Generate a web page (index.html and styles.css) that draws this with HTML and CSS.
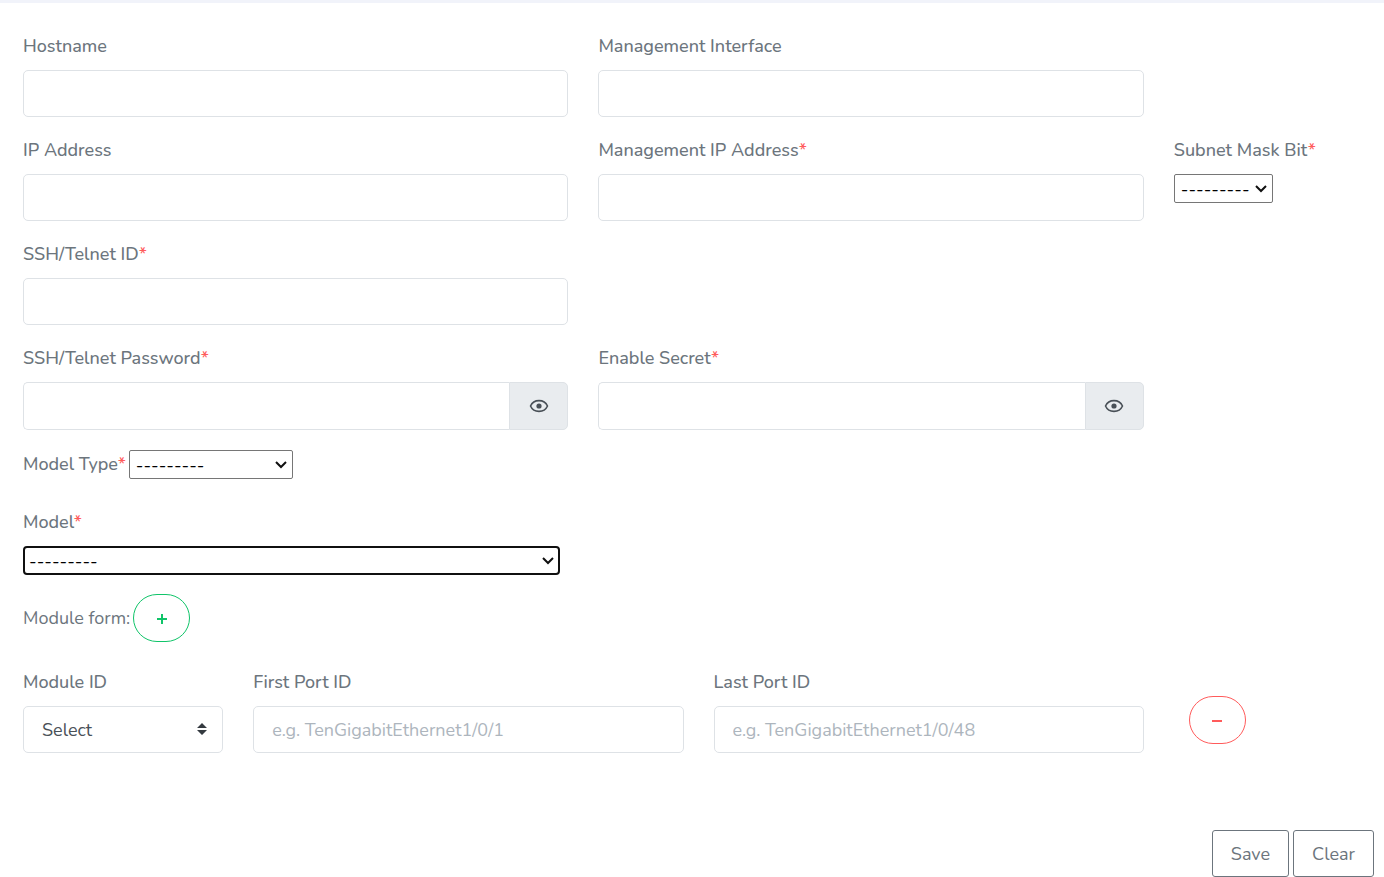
FILE: index.html
```html
<!DOCTYPE html>
<html lang="en">
<head>
    <meta charset="UTF-8">
    <meta name="viewport" content="width=device-width, initial-scale=1.0">
    <title>Add Device</title>
    <link rel="stylesheet" href="styles.css">
</head>
<body>
    <form class="device-form">
        <div class="row">
            <div class="field span-5">
                <label for="hostname">Hostname</label>
                <input type="text" id="hostname" class="form-control">
            </div>
            <div class="field span-5">
                <label for="mgmtInterface">Management Interface</label>
                <input type="text" id="mgmtInterface" class="form-control">
            </div>
        </div>

        <div class="row">
            <div class="field span-5">
                <label for="ipAddress">IP Address</label>
                <input type="text" id="ipAddress" class="form-control">
            </div>
            <div class="field span-5">
                <label for="mgmtIp">Management IP Address<span class="required">*</span></label>
                <input type="text" id="mgmtIp" class="form-control">
            </div>
            <div class="field span-2">
                <label for="subnet">Subnet Mask Bit<span class="required">*</span></label>
                <div class="plain-select subnet-select">
                    <select id="subnet">
                        <option>---------</option>
                    </select>
                    <svg class="chevron" width="12" height="8" viewBox="0 0 12 8"><path d="M1 1L6 6L11 1" fill="none" stroke="currentColor" stroke-width="2"/></svg>
                </div>
            </div>
        </div>

        <div class="row">
            <div class="field span-5">
                <label for="sshId">SSH/Telnet ID<span class="required">*</span></label>
                <input type="text" id="sshId" class="form-control">
            </div>
        </div>

        <div class="row">
            <div class="field span-5">
                <label for="sshPassword">SSH/Telnet Password<span class="required">*</span></label>
                <div class="input-group">
                    <input type="password" id="sshPassword" class="form-control">
                    <button type="button" class="toggle-password" aria-label="Show password">
                        <svg width="20" height="20" viewBox="0 0 20 20"><path d="M1.500 10C3.200 6.200 6.300 4.600 10 4.600S16.800 6.200 18.500 10C16.800 13.800 13.700 15.400 10 15.400S3.200 13.800 1.500 10Z" fill="none" stroke="currentColor" stroke-width="1.600"/><circle cx="10" cy="10" r="2.600" fill="currentColor"/></svg>
                    </button>
                </div>
            </div>
            <div class="field span-5">
                <label for="enableSecret">Enable Secret<span class="required">*</span></label>
                <div class="input-group">
                    <input type="password" id="enableSecret" class="form-control">
                    <button type="button" class="toggle-password" aria-label="Show secret">
                        <svg width="20" height="20" viewBox="0 0 20 20"><path d="M1.500 10C3.200 6.200 6.300 4.600 10 4.600S16.800 6.200 18.500 10C16.800 13.800 13.700 15.400 10 15.400S3.200 13.800 1.500 10Z" fill="none" stroke="currentColor" stroke-width="1.600"/><circle cx="10" cy="10" r="2.600" fill="currentColor"/></svg>
                    </button>
                </div>
            </div>
        </div>

        <div class="inline-field">
            <label for="modelType">Model Type<span class="required">*</span></label>
            <div class="plain-select type-select">
                <select id="modelType">
                    <option>---------</option>
                </select>
                <svg class="chevron" width="12" height="8" viewBox="0 0 12 8"><path d="M1 1L6 6L11 1" fill="none" stroke="currentColor" stroke-width="2"/></svg>
            </div>
        </div>

        <div class="field model-field">
            <label for="model">Model<span class="required">*</span></label>
            <div class="plain-select model-select">
                <select id="model">
                    <option>---------</option>
                </select>
                <svg class="chevron" width="12" height="8" viewBox="0 0 12 8"><path d="M1 1L6 6L11 1" fill="none" stroke="currentColor" stroke-width="2"/></svg>
            </div>
        </div>

        <div class="inline-field module-form">
            <span>Module form:</span>
            <button type="button" class="btn-round btn-add" aria-label="Add module">
                <svg width="12" height="14" viewBox="0 0 12 14"><path d="M1 8H11M6 3V13" stroke="currentColor" stroke-width="2"/></svg>
            </button>
        </div>

        <div class="row">
            <div class="field span-2">
                <label for="moduleId">Module ID</label>
                <div class="custom-select">
                    <select id="moduleId" class="form-control">
                        <option>Select</option>
                    </select>
                    <svg class="arrows" width="10" height="12" viewBox="0 0 10 12"><path d="M0 5L5 0L10 5ZM0 7L5 12L10 7Z" fill="currentColor"/></svg>
                </div>
            </div>
            <div class="field span-4">
                <label for="firstPort">First Port ID</label>
                <input type="text" id="firstPort" class="form-control" placeholder="e.g. TenGigabitEthernet1/0/1">
            </div>
            <div class="field span-4">
                <label for="lastPort">Last Port ID</label>
                <input type="text" id="lastPort" class="form-control" placeholder="e.g. TenGigabitEthernet1/0/48">
            </div>
            <div class="remove-cell span-2">
                <button type="button" class="btn-round btn-remove" aria-label="Remove module">
                    <svg width="12" height="14" viewBox="0 0 12 14"><path d="M1 8H11" stroke="currentColor" stroke-width="2"/></svg>
                </button>
            </div>
        </div>

        <div class="actions">
            <button type="submit" class="btn">Save</button>
            <button type="reset" class="btn">Clear</button>
        </div>
    </form>
</body>
</html>
```
FILE: styles.css
```css
* {
    box-sizing: border-box;
}
body {
    margin: 0;
    border-top: 3px solid #f1f3fa;
    background-color: #fff;
    color: #6c757d;
    font-family: Nunito, "Open Sans", sans-serif;
    font-size: 18px;
    line-height: 27px;
}
input, select, button {
    font-family: inherit;
    font-size: inherit;
    margin: 0;
}
svg {
    display: block;
}
label {
    font-weight: 500;
    white-space: nowrap;
}
.device-form {
    padding: 30px 10px 0 23px;
}
.row {
    display: grid;
    grid-template-columns: repeat(12, 1fr);
    column-gap: 30px;
    margin-bottom: 20px;
}
.span-2 {
    grid-column: span 2;
}
.span-4 {
    grid-column: span 4;
}
.span-5 {
    grid-column: span 5;
}
.field {
    display: flex;
    flex-direction: column;
    align-items: flex-start;
    gap: 10px;
    min-width: 0;
}
.required {
    color: #ff5b5b;
}
.form-control {
    width: 100%;
    height: 47px;
    padding: 0 18px;
    border: 1px solid #dee2e6;
    border-radius: 5px;
    background-color: #fff;
    color: #495057;
}
.form-control::placeholder {
    color: #adb5bd;
}
.input-group {
    display: flex;
    width: 100%;
}
.input-group .form-control {
    flex: 1;
    min-width: 0;
    height: 48px;
    border-right: 0;
    border-radius: 5px 0 0 5px;
}
.toggle-password {
    display: flex;
    align-items: center;
    justify-content: center;
    width: 59px;
    height: 48px;
    padding: 0;
    border: 1px solid #dee2e6;
    border-radius: 0 5px 5px 0;
    background-color: #e9ecef;
    color: #495057;
}
.plain-select {
    position: relative;
    max-width: 100%;
}
.plain-select select {
    display: block;
    appearance: none;
    width: 100%;
    height: 29px;
    padding: 0 6px;
    border: 1px solid #767676;
    border-radius: 2px;
    background-color: #fff;
    color: #000;
}
.chevron {
    position: absolute;
    top: 11px;
    right: 6px;
    color: #101010;
    pointer-events: none;
}
.subnet-select {
    width: 99px;
}
.type-select {
    width: 164px;
}
.model-select {
    width: 537px;
}
.model-select select {
    padding: 0 4px;
    border: 2px solid #101010;
    border-radius: 4px;
}
.inline-field {
    display: flex;
    align-items: center;
    gap: 3px;
}
.model-field {
    margin-top: 30px;
}
.module-form {
    margin: 19px 0 27px;
}
.btn-round {
    display: flex;
    align-items: center;
    justify-content: center;
    width: 57px;
    height: 48px;
    padding: 0;
    border: 1px solid;
    border-radius: 32px;
    background-color: transparent;
}
.btn-add {
    color: #10c469;
}
.btn-remove {
    color: #ff5b5b;
}
.remove-cell {
    padding: 27px 0 0 15px;
}
.custom-select {
    position: relative;
    width: 100%;
}
.custom-select select {
    appearance: none;
}
.arrows {
    position: absolute;
    top: 17px;
    right: 16px;
    color: #343a40;
    pointer-events: none;
}
.actions {
    display: flex;
    justify-content: flex-end;
    gap: 4px;
    margin-top: 77px;
}
.btn {
    height: 47px;
    padding: 0 18px;
    border: 1px solid #6c757d;
    border-radius: 3px;
    background-color: transparent;
    color: #6c757d;
}
```
